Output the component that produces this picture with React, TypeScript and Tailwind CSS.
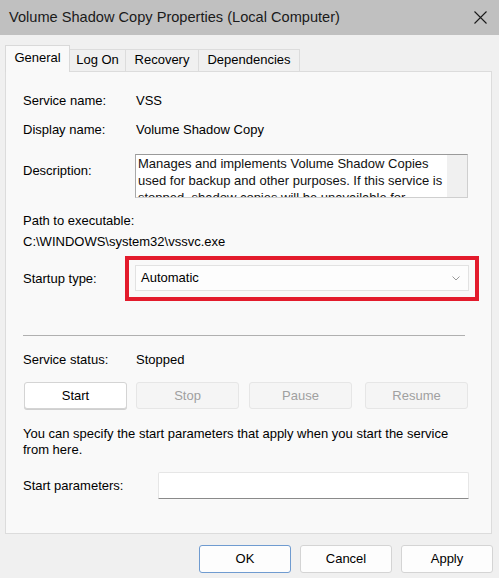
import React from "react";

const tabs = [
  { label: "General", w: "w-[65px]", active: true },
  { label: "Log On", w: "w-[56px]", active: false },
  { label: "Recovery", w: "w-[73px]", active: false },
  { label: "Dependencies", w: "w-[101px]", active: false },
];

const controlButtons = [
  { label: "Start", w: "w-[103px]", ml: "ml-[1px]", enabled: true },
  { label: "Stop", w: "w-[103px]", ml: "ml-[9px]", enabled: false },
  { label: "Pause", w: "w-[103px]", ml: "ml-[10px]", enabled: false },
  { label: "Resume", w: "w-[103px]", ml: "ml-[13px]", enabled: false },
];

const App = () => {
  return (
    <div className="w-[499px] h-[578px] bg-[#f0f0f0] text-[13px] text-black font-['Liberation_Sans',Arial,sans-serif] overflow-hidden">
      {/* title bar */}
      <div className="h-[35px] bg-[#c0c0c0] flex items-center justify-between pl-[9px] pr-[12px]">
        <span className="text-[14.6px] text-[#1a1a1a]">Volume Shadow Copy Properties (Local Computer)</span>
        <svg width="13" height="13" viewBox="0 0 13 13" className="mb-[1px]">
          <path d="M0.5 0.5 L12.5 12.5 M12.5 0.5 L0.5 12.5" stroke="#1a1a1a" strokeWidth="1.1" />
        </svg>
      </div>

      {/* tabs */}
      <div className="flex items-end pl-[5px] mt-[9px] h-[27px] relative z-10 leading-[16px]">
        {tabs.map((tab) =>
          tab.active ? (
            <div
              key={tab.label}
              className={`${tab.w} h-[27px] bg-[#f9f9f9] border border-b-0 border-[#d9d9d9] flex items-start justify-center pt-[4px] -mb-[1px]`}
            >
              {tab.label}
            </div>
          ) : (
            <div
              key={tab.label}
              className={`${tab.w} h-[22px] bg-[#f0f0f0] border border-l-0 border-b-0 border-[#dcdcdc] flex items-start justify-center pt-[2px]`}
            >
              {tab.label}
            </div>
          ),
        )}
      </div>

      {/* panel */}
      <div className="ml-[5px] w-[487px] h-[463px] bg-[#f9f9f9] border border-[#dcdcdc] pl-[17px] flex flex-col">
        <div className="flex items-center h-[20px] mt-[19px]">
          <span className="w-[113px]">Service name:</span>
          <span>VSS</span>
        </div>
        <div className="flex items-center h-[20px] mt-[9px]">
          <span className="w-[113px]">Display name:</span>
          <span>Volume Shadow Copy</span>
        </div>

        <div className="flex mt-[14px] h-[44px]">
          <span className="w-[112px] pt-[7px]">Description:</span>
          <div className="w-[333px] h-[44px] bg-white border border-[#cfcfcf] border-t-[#9a9a9a] border-l-[#a8a8a8] flex overflow-hidden">
            <p className="flex-1 pl-[2px] pt-0 leading-[17px] text-[#111]">
              Manages and implements Volume Shadow Copies used for backup and other purposes. If this service is
              stopped, shadow copies will be unavailable for backup and the backup may fail.
            </p>
            <div className="w-[20px] h-full bg-[#f0f0f0]" />
          </div>
        </div>

        <div className="h-[16px] leading-[16px] mt-[15px]">Path to executable:</div>
        <div className="h-[16px] leading-[16px] mt-[5px]">C:\WINDOWS\system32\vssvc.exe</div>

        <div className="flex items-center mt-[6px] h-[45px]">
          <span className="w-[102px]">Startup type:</span>
          <div className="border-[4px] border-[#e31b2c] px-[6px] pt-[5px] pb-[6px]">
            <div className="w-[334px] h-[26px] bg-[#fdfdfd] border border-[#e2e2e2] flex items-center justify-between pl-[5px] pr-[8px]">
              <span>Automatic</span>
              <svg width="8" height="5" viewBox="0 0 8 5">
                <path d="M0.5 0.5 L4 4 L7.5 0.5" stroke="#9a9a9a" strokeWidth="1" fill="none" />
              </svg>
            </div>
          </div>
        </div>

        <div className="w-[442px] h-[1px] bg-[#b0b0b0] mt-[34px]" />

        <div className="flex items-center h-[16px] mt-[16px]">
          <span className="w-[113px]">Service status:</span>
          <span>Stopped</span>
        </div>

        <div className="flex mt-[14px]">
          {controlButtons.map((b) => (
            <div
              key={b.label}
              className={`${b.w} ${b.ml} h-[27px] rounded-[3px] border flex items-center justify-center ${
                b.enabled
                  ? "bg-white border-[#d4d4d4] text-black shadow-[0_1px_0_#cfcfcf]"
                  : "bg-[#f5f5f5] border-[#e6e6e6] text-[#a0a0a0]"
              }`}
            >
              {b.label}
            </div>
          ))}
        </div>

        <p className="mt-[17px] leading-[16px] w-[450px]">
          You can specify the start parameters that apply when you start the service from here.
        </p>

        <div className="flex items-center mt-[14px]">
          <span className="w-[135px]">Start parameters:</span>
          <div className="w-[311px] h-[27px] bg-white border border-[#e6e6e6] border-b-[#8a8a8a] rounded-t-[2px]" />
        </div>
      </div>

      {/* dialog buttons */}
      <div className="flex justify-end gap-[9px] pr-[6px] mt-[11px]">
        <div className="w-[92px] h-[28px] bg-[#fdfdfd] border border-[#6f9bd0] rounded-[3px] flex items-center justify-center">OK</div>
        <div className="w-[92px] h-[28px] bg-[#fdfdfd] border border-[#d4d4d4] rounded-[3px] flex items-center justify-center">Cancel</div>
        <div className="w-[92px] h-[28px] bg-[#fdfdfd] border border-[#d4d4d4] rounded-[3px] flex items-center justify-center">Apply</div>
      </div>
    </div>
  );
};

export default App;
